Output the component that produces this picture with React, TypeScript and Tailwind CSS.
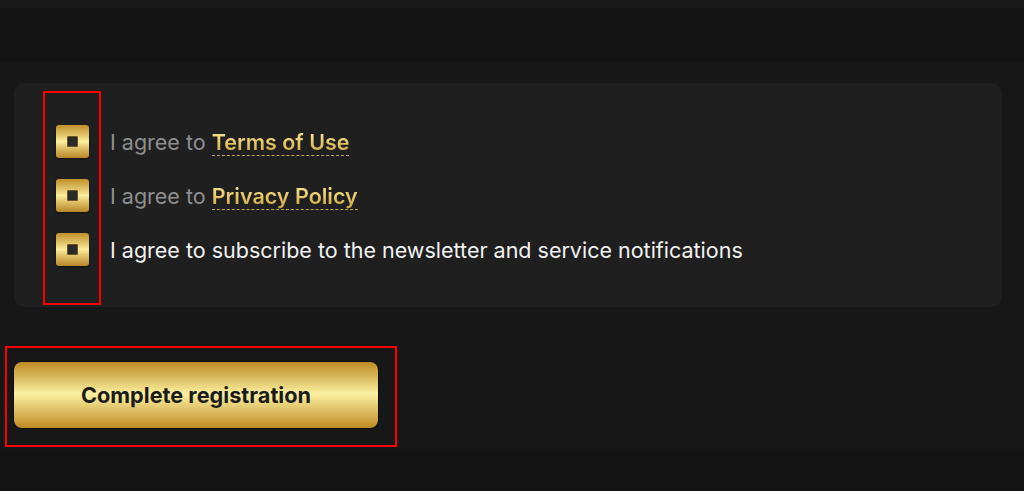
const rows = [
  { id: 'terms', prefix: 'I agree to', link: 'Terms of Use' },
  { id: 'privacy', prefix: 'I agree to', link: 'Privacy Policy' },
  { id: 'news', prefix: 'I agree to subscribe to the newsletter and service notifications', link: '' },
];

const GoldCheck = () => (
  <span className="flex h-[33px] w-[33px] shrink-0 items-center justify-center rounded-[3px] bg-[linear-gradient(180deg,#c18f2a_0%,#e2c46a_30%,#fbee9e_50%,#e0c066_70%,#b8862a_100%)] shadow-[0_1px_2px_rgba(0,0,0,0.5)]">
    <span className="h-[11px] w-[11px] rounded-[1px] border border-[#6b5420] bg-[#2a2a2a]" />
  </span>
);

const App = () => {
  return (
    <div className="flex h-[491px] w-full flex-col bg-[#171717] font-['Inter','Liberation_Sans',sans-serif]">
      <div className="h-[8px] bg-[#191919]" />
      <div className="h-[53px] bg-[#131313]" />

      <div className="relative flex flex-col px-[14px] pt-[22px] h-[389px]">
        <div className="relative h-[224px] w-[988px] rounded-[10px] bg-[#1f1f1f] pl-[42px] pt-[42px]">
          <div className="flex flex-col gap-[21px]">
            {rows.map((r) => (
              <label key={r.id} className="flex items-center gap-[21px]">
                <GoldCheck />
                <span
                  className={`text-[21.5px] leading-[26px] ${
                    r.link ? 'text-[#8f8f8f]' : 'text-[#f2f2f2]'
                  }`}
                >
                  {r.prefix}
                  {r.link && (
                    <>
                      {' '}
                      <span className="border-b border-dashed border-[#c9a545] bg-[linear-gradient(180deg,#fbe9a0_0%,#e8c96a_50%,#c9a040_100%)] bg-clip-text font-semibold text-transparent">
                        {r.link}
                      </span>
                    </>
                  )}
                </span>
              </label>
            ))}
          </div>
          {/* annotation */}
          <div className="absolute left-[29px] top-[8px] h-[214px] w-[58px] border-2 border-[#ff0000]" />
        </div>

        <div className="relative mt-[55px]">
          <button className="flex h-[66px] w-[364px] items-center justify-center rounded-[8px] bg-[linear-gradient(180deg,#bf8a22_0%,#dcbd62_25%,#fbf0a0_48%,#dcbd62_75%,#bf8a22_100%)] text-[21.7px] font-bold text-[#1b1b1b] shadow-[0_0_0_1px_rgba(0,0,0,0.4)]">
            Complete registration
          </button>
          <div className="absolute left-[-9px] top-[-16px] h-[101px] w-[392px] border-2 border-[#ff0000]" />
        </div>
      </div>

      <div className="flex-1 bg-[#131313]" />
    </div>
  );
};

export default App;
